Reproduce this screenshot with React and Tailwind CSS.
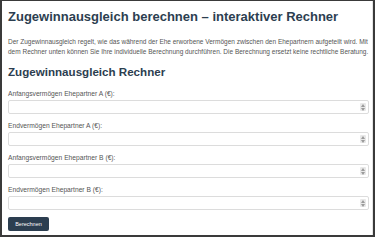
import { useState } from "react";

const FIELDS = [
  { id: "anfangA", label: "Anfangsvermögen Ehepartner A (€):" },
  { id: "endA", label: "Endvermögen Ehepartner A (€):" },
  { id: "anfangB", label: "Anfangsvermögen Ehepartner B (€):" },
  { id: "endB", label: "Endvermögen Ehepartner B (€):" },
];

// kleiner Spinner wie beim nativen number-Input
function Spinner() {
  return (
    <span className="pointer-events-none absolute right-[3px] top-1/2 -translate-y-1/2 flex flex-col items-center justify-center w-[6px] h-[8px] bg-[#e8e8e8] rounded-[1px]">
      <svg width="4" height="3" viewBox="0 0 4 3">
        <path d="M0 3 L2 0 L4 3 Z" fill="#9a9a9a" />
      </svg>
      <svg width="4" height="3" viewBox="0 0 4 3" className="mt-[1px]">
        <path d="M0 0 L2 3 L4 0 Z" fill="#9a9a9a" />
      </svg>
    </span>
  );
}

export default function App() {
  const [values, setValues] = useState({});

  return (
    <div className="w-[375px] h-[237px] overflow-hidden bg-white border-l-2 border-r-2 border-b-2 border-t border-[#3a3a3a] font-['Liberation_Sans',Arial,sans-serif]">
      <div className="pl-[6px] pr-[3px] pt-[8px] border-r border-[#e4e4e4] h-full">
        <h1 className="text-[13px] leading-[16px] font-bold text-[#2c3e50]">
          Zugewinnausgleich berechnen – interaktiver Rechner
        </h1>

        <p className="mt-[12px] text-[6.5px] leading-[10px] text-[#555]">
          Der Zugewinnausgleich regelt, wie das während der Ehe erworbene
          Vermögen zwischen den Ehepartnern aufgeteilt wird. Mit dem Rechner
          unten können Sie Ihre individuelle Berechnung durchführen. Die
          Berechnung ersetzt keine rechtliche Beratung.
        </p>

        <h2 className="mt-[8px] text-[11.6px] leading-[14px] font-bold text-[#2c3e50]">
          Zugewinnausgleich Rechner
        </h2>

        <form className="mt-[10px]" onSubmit={(e) => e.preventDefault()}>
          {FIELDS.map((f) => (
            <div key={f.id} className="mb-[7px]">
              <label
                htmlFor={f.id}
                className="block text-[6.7px] leading-[9px] text-[#555]"
              >
                {f.label}
              </label>
              <div className="relative mt-[2px]">
                <input
                  id={f.id}
                  type="text"
                  value={values[f.id] || ""}
                  onChange={(e) =>
                    setValues({ ...values, [f.id]: e.target.value })
                  }
                  className="block w-full h-[14px] border border-[#dcdcdc] rounded-[2px] bg-white px-1 text-[6.5px] outline-none"
                />
                <Spinner />
              </div>
            </div>
          ))}

          <button
            type="submit"
            className="w-[41px] h-[14px] bg-[#2c3e50] text-white text-[5.5px] rounded-[2px] flex items-center justify-center"
          >
            Berechnen
          </button>
        </form>
      </div>
    </div>
  );
}
